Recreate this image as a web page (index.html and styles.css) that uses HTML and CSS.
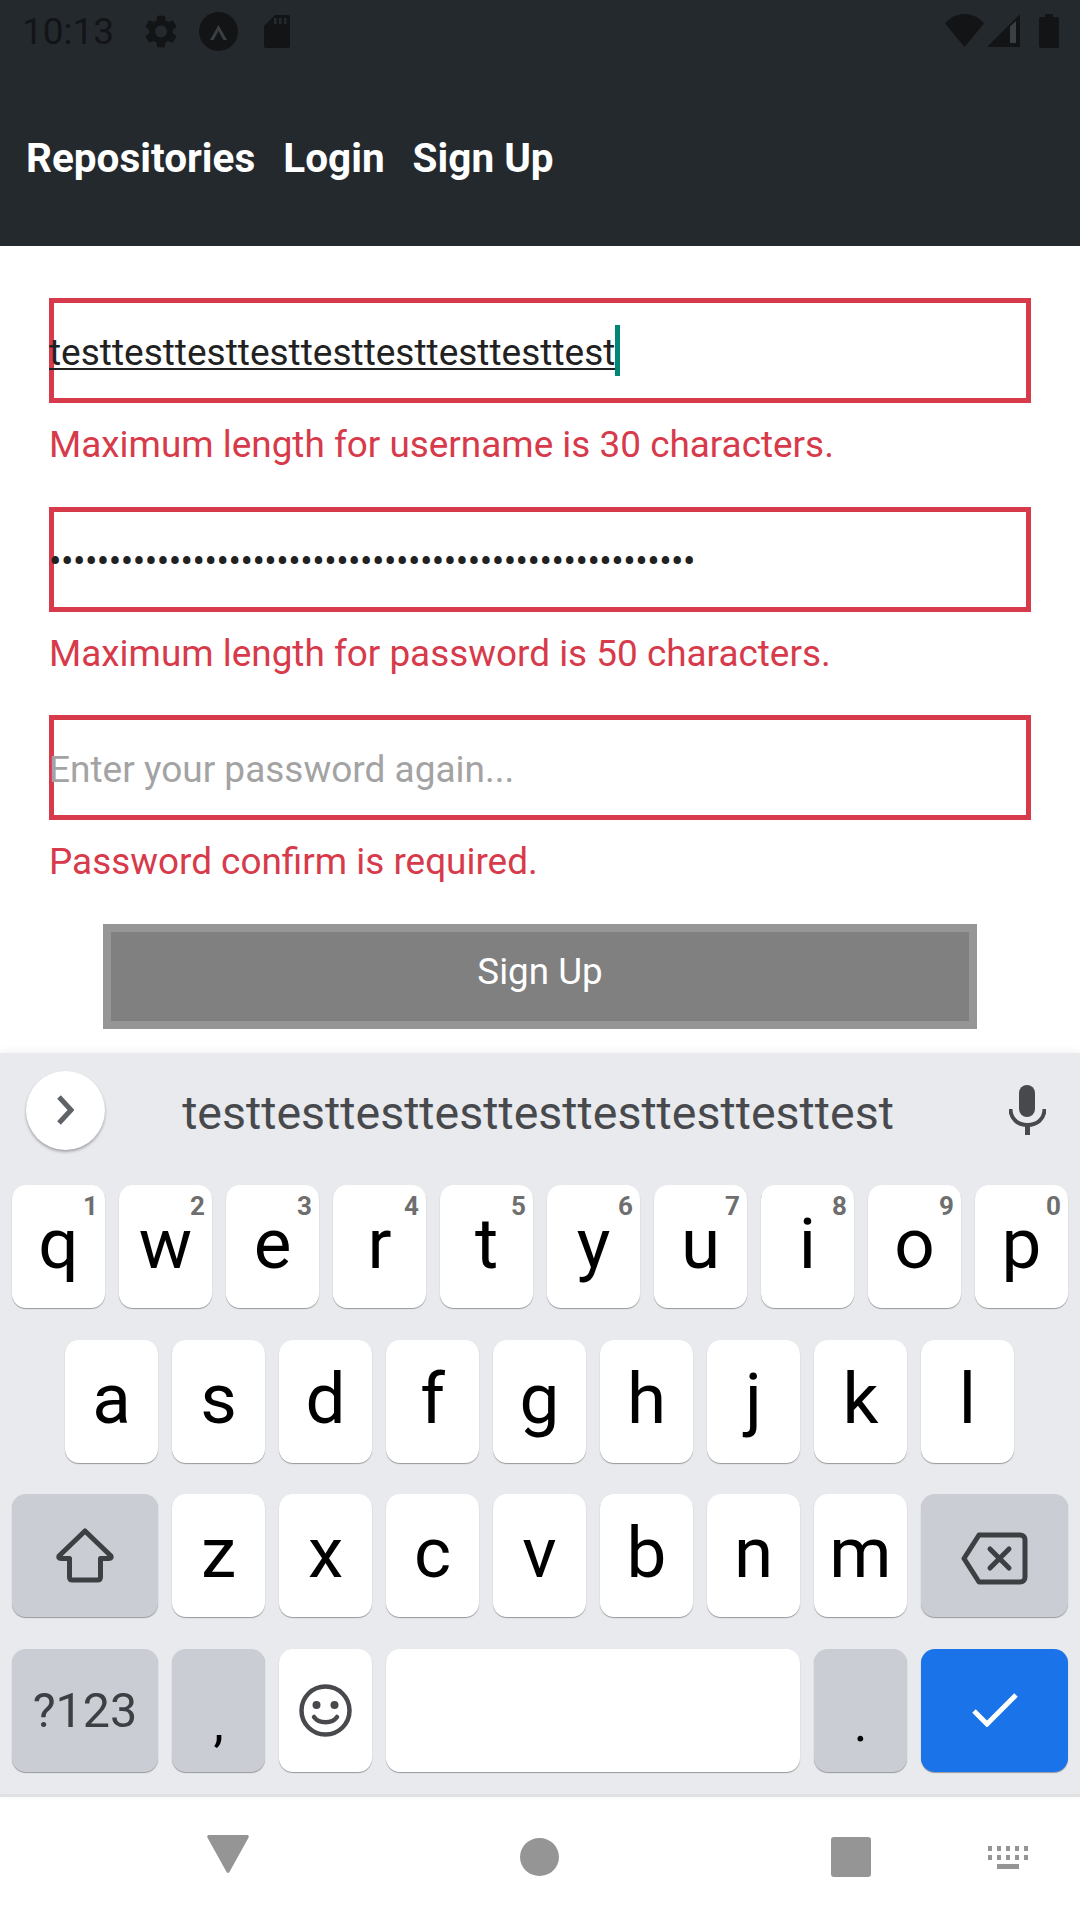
FILE: index.html
```html
<!DOCTYPE html>
<html lang="en">
<head>
    <meta charset="UTF-8">
    <meta name="viewport" content="width=device-width, initial-scale=1.0">
    <title>Sign Up</title>
    <link rel="stylesheet" href="styles.css">
</head>
<body>
    <header class="app-header">
        <div class="status-bar">
            <span class="clock">10:13</span>
            <svg class="status-gear" viewBox="2.5 2 19 20"><path d="M19.14 12.94c.04-.3.06-.61.06-.94 0-.32-.02-.64-.07-.94l2.03-1.58c.18-.14.23-.41.12-.61l-1.92-3.32c-.12-.22-.37-.29-.59-.22l-2.39.96c-.5-.38-1.03-.7-1.62-.94l-.36-2.54c-.04-.24-.24-.41-.48-.41h-3.84c-.24 0-.43.17-.47.41l-.36 2.54c-.59.24-1.13.57-1.62.94l-2.39-.96c-.22-.08-.47 0-.59.22L2.74 8.87c-.12.21-.08.47.12.61l2.03 1.58c-.05.3-.09.63-.09.94s.02.64.07.94l-2.03 1.58c-.18.14-.23.41-.12.61l1.92 3.32c.12.22.37.29.59.22l2.39-.96c.5.38 1.03.7 1.62.94l.36 2.54c.05.24.24.41.48.41h3.84c.24 0 .44-.17.47-.41l.36-2.54c.59-.24 1.13-.56 1.62-.94l2.39.96c.22.08.47 0 .59-.22l1.92-3.32c.12-.22.07-.47-.12-.61l-2.01-1.58zM12 15.6c-1.98 0-3.6-1.62-3.6-3.6s1.62-3.6 3.6-3.6 3.6 1.62 3.6 3.6-1.62 3.6-3.6 3.6z"/></svg>
            <svg class="status-expo" viewBox="0 0 39 39"><circle cx="19.5" cy="19.5" r="19.5"/><path class="status-cut" d="M11 28 L19.5 13 L28 28 H24.5 L19.5 19 L14.5 28 Z"/></svg>
            <svg class="status-sd" viewBox="0 0 26 33"><path fill-rule="evenodd" d="M11 0H24C25.1 0 26 .9 26 2V31C26 32.1 25.1 33 24 33H2C.9 33 0 32.1 0 31V11ZM10 3V9H12.5V3ZM15 3V9H17.5V3ZM20 3V9H22.5V3Z"/></svg>
            <span class="status-spacer"></span>
            <svg class="status-wifi" viewBox="0 0 39 33"><path d="M19.5 33 L0 9.5 C5 3.5 12 0 19.5 0 C27 0 34 3.5 39 9.5 Z"/></svg>
            <svg class="status-signal" viewBox="0 0 33 33"><path d="M33 0V33H0Z"/><path class="status-cut" d="M23 12.5V29H29V7Z"/></svg>
            <svg class="status-battery" viewBox="0 0 20 34"><path d="M6 0H14V3H18C19.1 3 20 3.9 20 5V32C20 33.1 19.1 34 18 34H2C.9 34 0 33.1 0 32V5C0 3.9 .9 3 2 3H6Z"/></svg>
        </div>
        <nav class="app-nav">
            <a class="nav-link">Repositories</a>
            <a class="nav-link">Login</a>
            <a class="nav-link">Sign Up</a>
        </nav>
    </header>

    <form class="signup-form">
        <div class="field">
            <span class="field-text field-typed">testtesttesttesttesttesttesttesttest</span><span class="caret"></span>
        </div>
        <p class="field-error">Maximum length for username is 30 characters.</p>

        <div class="field">
            <span class="field-text field-dots">••••••••••••••••••••••••••••••••••••••••••••••••••••••</span>
        </div>
        <p class="field-error">Maximum length for password is 50 characters.</p>

        <div class="field">
            <span class="field-text field-placeholder">Enter your password again...</span>
        </div>
        <p class="field-error">Password confirm is required.</p>

        <button class="submit-btn" type="button" disabled>Sign Up</button>
    </form>

    <section class="keyboard">
        <div class="suggest-row">
            <span class="suggest-toggle">
                <svg viewBox="0 0 17 30"><path d="M2 2 L14 15 L2 28" fill="none" stroke="#5f6368" stroke-width="5"/></svg>
            </span>
            <span class="suggest-word">testtesttesttesttesttesttesttesttest</span>
            <svg class="suggest-mic" viewBox="0 0 37 50">
                <rect x="10" y="0" width="16" height="32" rx="8"/>
                <path d="M1.5 24 C1.5 34 9 40 18.5 40 C28 40 35.5 34 35.5 24" fill="none" stroke="#47494d" stroke-width="4"/>
                <rect x="16" y="39" width="5" height="11"/>
            </svg>
        </div>
        <div class="key-row">
            <span class="key">q<sup class="key-hint">1</sup></span>
            <span class="key">w<sup class="key-hint">2</sup></span>
            <span class="key">e<sup class="key-hint">3</sup></span>
            <span class="key">r<sup class="key-hint">4</sup></span>
            <span class="key">t<sup class="key-hint">5</sup></span>
            <span class="key">y<sup class="key-hint">6</sup></span>
            <span class="key">u<sup class="key-hint">7</sup></span>
            <span class="key">i<sup class="key-hint">8</sup></span>
            <span class="key">o<sup class="key-hint">9</sup></span>
            <span class="key">p<sup class="key-hint">0</sup></span>
        </div>
        <div class="key-row key-row-home">
            <span class="key">a</span>
            <span class="key">s</span>
            <span class="key">d</span>
            <span class="key">f</span>
            <span class="key">g</span>
            <span class="key">h</span>
            <span class="key">j</span>
            <span class="key">k</span>
            <span class="key">l</span>
        </div>
        <div class="key-row">
            <span class="key key-fn key-wide key-graphic">
                <svg class="icon-shift" viewBox="0 0 58 55"><path d="M29 3 L55 28 C55.5 29.5 55 30.5 53 30.5 H44.5 V49 C44.5 51 43.5 52 41.5 52 H16.5 C14.5 52 13.5 51 13.5 49 V30.5 H5 C3 30.5 2.5 29.5 3 28 Z" fill="none" stroke="#3c4043" stroke-width="5" stroke-linejoin="round"/></svg>
            </span>
            <span class="key">z</span>
            <span class="key">x</span>
            <span class="key">c</span>
            <span class="key">v</span>
            <span class="key">b</span>
            <span class="key">n</span>
            <span class="key">m</span>
            <span class="key key-fn key-wide key-graphic">
                <svg class="icon-delete" viewBox="0 0 67 53"><path d="M18 3 H59 C62 3 64 5 64 8 V45 C64 48 62 50 59 50 H18 L3 26.5 Z" fill="none" stroke="#3c4043" stroke-width="5" stroke-linejoin="round"/><path d="M29 17 L48 36 M48 17 L29 36" fill="none" stroke="#3c4043" stroke-width="5" stroke-linecap="round"/></svg>
            </span>
        </div>
        <div class="key-row">
            <span class="key key-fn key-wide key-graphic key-symbols">?123</span>
            <span class="key key-fn key-punct">,</span>
            <span class="key key-graphic">
                <svg class="icon-emoji" viewBox="0 0 53 53"><circle cx="26.5" cy="26.5" r="24" fill="none" stroke="#47494d" stroke-width="4.5"/><circle cx="17.5" cy="21" r="4" fill="#47494d"/><circle cx="35.5" cy="21" r="4" fill="#47494d"/><path d="M15 33 C20 40 33 40 38 33" fill="none" stroke="#47494d" stroke-width="4.5" stroke-linecap="round"/></svg>
            </span>
            <span class="key key-space"></span>
            <span class="key key-fn key-punct">.</span>
            <span class="key key-enter key-wide key-graphic">
                <svg class="icon-check" viewBox="0 0 46 34"><path d="M2 18 L15 31 L44 2" fill="none" stroke="#fff" stroke-width="5"/></svg>
            </span>
        </div>
    </section>

    <footer class="nav-bar">
        <svg class="nav-back" viewBox="0 0 42 38"><path d="M2 0H40C41.5 0 42 1 41.6 2.5L23 36C21.8 38.6 20.2 38.6 19 36L.4 2.5C0 1 .5 0 2 0Z"/></svg>
        <svg class="nav-home" viewBox="0 0 39 38"><ellipse cx="19.5" cy="19" rx="19.5" ry="19"/></svg>
        <svg class="nav-recents" viewBox="0 0 40 40"><rect width="40" height="40" rx="3"/></svg>
        <svg class="nav-keys" viewBox="0 0 40 23">
            <path d="M0 0h4v5H0zM9 0h4v5H9zM18 0h4v5h-4zM27 0h4v5h-4zM36 0h4v5h-4z"/>
            <path d="M0 9h4v5H0zM9 9h4v5H9zM18 9h4v5h-4zM27 9h4v5h-4zM36 9h4v5h-4z"/>
            <path d="M9 18h22v5H9z"/>
        </svg>
    </footer>
</body>
</html>
```

FILE: styles.css
```css
* {
    box-sizing: border-box;
}
body {
    margin: 0;
    width: 1080px;
    height: 1920px;
    display: flex;
    flex-direction: column;
    overflow: hidden;
    background-color: #fff;
    font-family: Roboto, "Liberation Sans", sans-serif;
}

/* header */
.app-header {
    height: 246px;
    background-color: #24292e;
}
.status-bar {
    display: flex;
    align-items: flex-start;
    height: 60px;
    padding: 12px 21px 0 22px;
    fill: #121416;
}
.clock {
    width: 123px;
    margin-top: -1px;
    font-size: 37px;
    line-height: 42px;
    color: #121416;
}
.status-cut {
    fill: #3a3f44;
}
.status-gear {
    width: 32px;
    height: 33px;
    margin-top: 3px;
}
.status-expo {
    width: 39px;
    height: 39px;
    margin-left: 22px;
}
.status-sd {
    width: 26px;
    height: 33px;
    margin: 3px 0 0 26px;
}
.status-spacer {
    flex: 1;
}
.status-wifi {
    width: 39px;
    height: 33px;
    margin-top: 2px;
}
.status-signal {
    width: 33px;
    height: 33px;
    margin: 2px 0 0 3px;
}
.status-battery {
    width: 20px;
    height: 34px;
    margin: 2px 0 0 19px;
}
.app-nav {
    display: flex;
    gap: 28px;
    padding: 75px 0 0 26px;
}
.nav-link {
    font-size: 40.5px;
    line-height: 46px;
    font-weight: 700;
    color: #fff;
}

/* form */
.signup-form {
    padding: 52px 49px 0;
}
.field {
    display: flex;
    align-items: center;
    height: 105px;
    border: 5px solid #d73a4a;
}
.field-text {
    margin-left: -5px;
    padding-top: 4px;
    font-size: 37px;
    line-height: 44px;
}
.field-typed {
    color: #212121;
    text-decoration: underline;
    text-decoration-thickness: 2px;
    text-underline-offset: 3px;
}
.caret {
    width: 5px;
    height: 51px;
    background-color: #008577;
}
.field-dots {
    padding-top: 6px;
    letter-spacing: -0.52px;
    color: #212121;
}
.field-placeholder {
    color: #a3a3a3;
}
.field-error {
    margin: 22px 0 41.5px;
    font-size: 36.9px;
    line-height: 40px;
    color: #d73a4a;
}
.submit-btn {
    display: block;
    width: 874px;
    height: 105px;
    margin: 0 0 0 54px;
    padding: 0 0 9px;
    border: 8px solid #969696;
    background-color: #808080;
    font-family: inherit;
    font-size: 36.75px;
    color: #fff;
}

/* keyboard */
.keyboard {
    margin-top: auto;
    height: 744px;
    background-color: #e8eaed;
    border-bottom: 3px solid #dfe1e3;
    box-shadow: 0 -2px 8px rgba(0, 0, 0, 0.06);
}
.suggest-row {
    display: flex;
    align-items: center;
    height: 132px;
    padding: 0 34px 18px 26px;
}
.suggest-toggle {
    display: flex;
    align-items: center;
    justify-content: center;
    width: 79px;
    height: 79px;
    border-radius: 50%;
    background-color: #fff;
    box-shadow: 0 2px 3px rgba(0, 0, 0, 0.3);
}
.suggest-toggle svg {
    width: 17px;
    height: 30px;
}
.suggest-word {
    flex: 1;
    padding: 6px 38px 0 0;
    text-align: center;
    font-size: 46.5px;
    color: #47494d;
}
.suggest-mic {
    width: 37px;
    height: 50px;
    fill: #47494d;
}
.key-row {
    display: flex;
    gap: 14px;
    height: 124px;
    margin-bottom: 30.67px;
    padding: 0 12px;
}
.key-row-home {
    padding-left: 65px;
}
.key {
    position: relative;
    display: flex;
    align-items: center;
    justify-content: center;
    width: 93px;
    height: 123px;
    padding-bottom: 6px;
    border-radius: 14px;
    background-color: #fff;
    box-shadow: 0 1px 1px rgba(0, 0, 0, 0.35);
    font-size: 71px;
    color: #000;
}
.key-hint {
    position: absolute;
    top: 6px;
    right: 7px;
    font-size: 26px;
    line-height: 30px;
    font-weight: 700;
    color: #6e6e6e;
}
.key-fn {
    background-color: #cacdd4;
}
.key-wide {
    width: 146px;
}
.key-wide:last-child {
    width: 147px;
}
.key-graphic {
    padding-bottom: 0;
}
.key-symbols {
    font-size: 48.5px;
    color: #3c4043;
}
.key-punct {
    align-items: flex-end;
    padding-bottom: 18px;
    font-size: 52px;
    line-height: normal;
}
.key-space {
    width: 414px;
}
.key-enter {
    background-color: #1a73e8;
}
.icon-shift {
    width: 58px;
    height: 55px;
}
.icon-delete {
    width: 67px;
    height: 53px;
    margin-top: 6px;
}
.icon-emoji {
    width: 53px;
    height: 53px;
}
.icon-check {
    width: 46px;
    height: 34px;
}

/* android nav bar */
.nav-bar {
    display: flex;
    align-items: center;
    height: 123px;
    padding: 0 0 3px 207px;
    fill: #959595;
}
.nav-back {
    width: 42px;
    height: 38px;
    margin-bottom: 6px;
}
.nav-home {
    width: 39px;
    height: 38px;
    margin-left: 271px;
}
.nav-recents {
    width: 40px;
    height: 40px;
    margin-left: 272px;
}
.nav-keys {
    width: 40px;
    height: 23px;
    margin-left: 117px;
}
```
